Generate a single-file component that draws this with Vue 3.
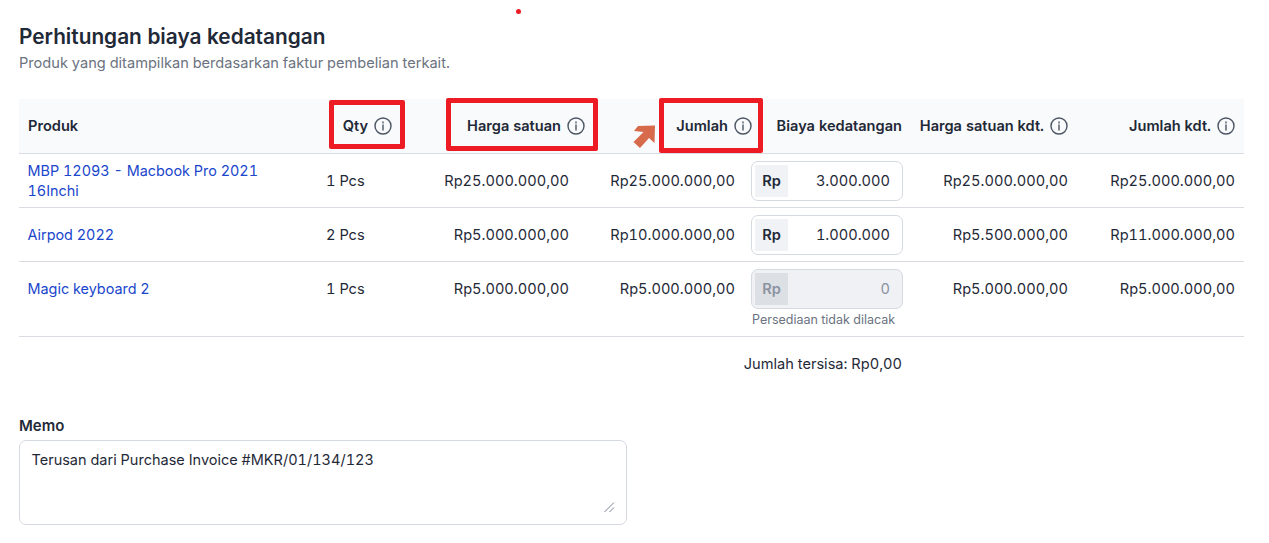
<script setup>
const rows = [
  { name: 'MBP 12093 - Macbook Pro 2021 16Inchi', qty: '1 Pcs', price: 'Rp25.000.000,00', total: 'Rp25.000.000,00', cost: '3.000.000', unit: 'Rp25.000.000,00', sum: 'Rp25.000.000,00' },
  { name: 'Airpod 2022', qty: '2 Pcs', price: 'Rp5.000.000,00', total: 'Rp10.000.000,00', cost: '1.000.000', unit: 'Rp5.500.000,00', sum: 'Rp11.000.000,00' },
  { name: 'Magic keyboard 2', qty: '1 Pcs', price: 'Rp5.000.000,00', total: 'Rp5.000.000,00', cost: '0', unit: 'Rp5.000.000,00', sum: 'Rp5.000.000,00', disabled: true, note: 'Persediaan tidak dilacak' },
]
</script>

<template>
  <main class="page">
    <span class="dot"></span>
    <h1>Perhitungan biaya kedatangan</h1>
    <p class="sub">Produk yang ditampilkan berdasarkan faktur pembelian terkait.</p>

    <section class="table">
      <header class="head">
        <div class="th">Produk</div>
        <div class="th end">Qty<svg class="info" viewBox="0 0 18 18"><circle cx="9" cy="9" r="8" /><path d="M9 8v5M9 5v.9" /></svg></div>
        <div class="th end">Harga satuan<svg class="info" viewBox="0 0 18 18"><circle cx="9" cy="9" r="8" /><path d="M9 8v5M9 5v.9" /></svg></div>
        <div class="th end">Jumlah<svg class="info" viewBox="0 0 18 18"><circle cx="9" cy="9" r="8" /><path d="M9 8v5M9 5v.9" /></svg></div>
        <div class="th end">Biaya kedatangan</div>
        <div class="th end">Harga satuan kdt.<svg class="info" viewBox="0 0 18 18"><circle cx="9" cy="9" r="8" /><path d="M9 8v5M9 5v.9" /></svg></div>
        <div class="th end">Jumlah kdt.<svg class="info" viewBox="0 0 18 18"><circle cx="9" cy="9" r="8" /><path d="M9 8v5M9 5v.9" /></svg></div>
      </header>

      <div v-for="row in rows" :key="row.name" class="row">
        <a class="cell name">{{ row.name }}</a>
        <div class="cell">{{ row.qty }}</div>
        <div class="cell num">{{ row.price }}</div>
        <div class="cell num">{{ row.total }}</div>
        <div class="cost">
          <div class="input" :class="{ off: row.disabled }">
            <span class="pre">Rp</span>
            <span class="val">{{ row.cost }}</span>
          </div>
          <div v-if="row.note" class="note">{{ row.note }}</div>
        </div>
        <div class="cell num">{{ row.unit }}</div>
        <div class="cell num">{{ row.sum }}</div>
      </div>
    </section>

    <div class="rest">Jumlah tersisa: Rp0,00</div>

    <label class="memo-label">Memo</label>
    <div class="memo">
      Terusan dari Purchase Invoice #MKR/01/134/123
      <svg class="grip" viewBox="0 0 12 12"><path d="M1.5 11L11 1.5M6.5 11L11 6.500" /></svg>
    </div>

    <span class="mark m1"></span>
    <span class="mark m2"></span>
    <span class="mark m3"></span>
    <svg class="arrow" viewBox="0 0 24 24"><path d="M6 1L23 .5 22.500 18 17 13 8 23 1.500 17 11.500 7 2 6z" /></svg>
  </main>
</template>

<style scoped>
.page {
  position: relative;
  box-sizing: border-box;
  width: 1269px;
  height: 543px;
  padding: 25px 25px 0 19px;
  overflow: hidden;
  background: #fff;
  color: #1f2937;
  font-family: Inter, "Liberation Sans", sans-serif;
  font-size: 14.600px;
  font-variant-numeric: tabular-nums;
  line-height: 20px;
}
h1 {
  margin: 0;
  font-size: 20.800px;
  line-height: 24px;
  font-weight: 600;
}
.sub {
  margin: 4px 0 0;
  color: #6b7280;
  font-size: 14.600px;
  line-height: 20px;
}
.table {
  margin-top: 26px;
}
.head,
.row {
  display: grid;
  border-bottom: 1px solid #d9dde3;
}
.head {
  grid-template-columns: 298px 84px 193px 167px 150px 166px 167px;
  height: 55px;
  box-sizing: border-box;
  background: #f9fafb;
}
.row {
  grid-template-columns: 298px 83px 178px 166px 167px 166px 167px;
  padding-top: 6.500px;
  height: 54px;
  box-sizing: border-box;
}
.row:last-child {
  height: 75px;
}
.th {
  display: flex;
  align-items: center;
  padding: 0 9px;
  font-weight: 600;
  white-space: nowrap;
}
.end {
  justify-content: flex-end;
}
.info {
  flex: none;
  width: 18px;
  height: 18px;
  margin-left: 6px;
  fill: none;
  stroke: #4b5563;
  stroke-width: 1.400;
  stroke-linecap: round;
}
.cell {
  display: flex;
  align-items: center;
  height: 40px;
  padding: 0 9px;
}
.name {
  padding-right: 30px;
  padding-left: 8.500px;
  color: #1a46cc;
  font-size: 14.400px;
}
.num {
  justify-content: flex-end;
}
.cost {
  padding-left: 7px;
}
.input {
  display: flex;
  align-items: center;
  box-sizing: border-box;
  width: 152px;
  height: 40px;
  padding: 3px;
  border: 1.500px solid #d5d9e0;
  border-radius: 7px;
  background: #fff;
}
.pre {
  display: flex;
  align-items: center;
  justify-content: center;
  width: 33px;
  height: 100%;
  background: #f0f2f5;
  font-weight: 600;
}
.val {
  flex: 1;
  padding-right: 9px;
  text-align: right;
}
.off {
  background: #eff1f4;
  color: #8b93a1;
}
.off .pre {
  background: #dcdfe4;
}
.note {
  margin-top: 3px;
  padding-left: 1px;
  color: #6b7280;
  font-size: 12.500px;
  line-height: 16px;
}
.rest {
  width: 883px;
  margin-top: 17px;
  text-align: right;
}
.memo-label {
  display: block;
  margin-top: 42px;
  font-size: 15px;
  font-weight: 600;
}
.memo {
  position: relative;
  box-sizing: border-box;
  width: 608px;
  height: 85px;
  margin-top: 4px;
  padding: 9px 11.500px;
  border: 1.500px solid #d5d9e0;
  border-radius: 7px;
  font-size: 14.500px;
}
.grip {
  position: absolute;
  right: 11px;
  bottom: 11px;
  width: 12px;
  height: 12px;
  fill: none;
  stroke: #7b8494;
  stroke-width: 1;
}
.dot {
  position: absolute;
  left: 516px;
  top: 9px;
  width: 5px;
  height: 5px;
  border-radius: 50%;
  background: #ed1c24;
}
.mark {
  position: absolute;
  box-sizing: border-box;
  border: 5.500px solid #ed1c24;
  border-radius: 2px;
}
.m1 {
  left: 329px;
  top: 100px;
  width: 76px;
  height: 49px;
}
.m2 {
  left: 446px;
  top: 98px;
  width: 152px;
  height: 53px;
}
.m3 {
  left: 659px;
  top: 98px;
  width: 104px;
  height: 55px;
}
.arrow {
  position: absolute;
  left: 632px;
  top: 125px;
  width: 24px;
  height: 24px;
  fill: #d66a4b;
}
</style>
